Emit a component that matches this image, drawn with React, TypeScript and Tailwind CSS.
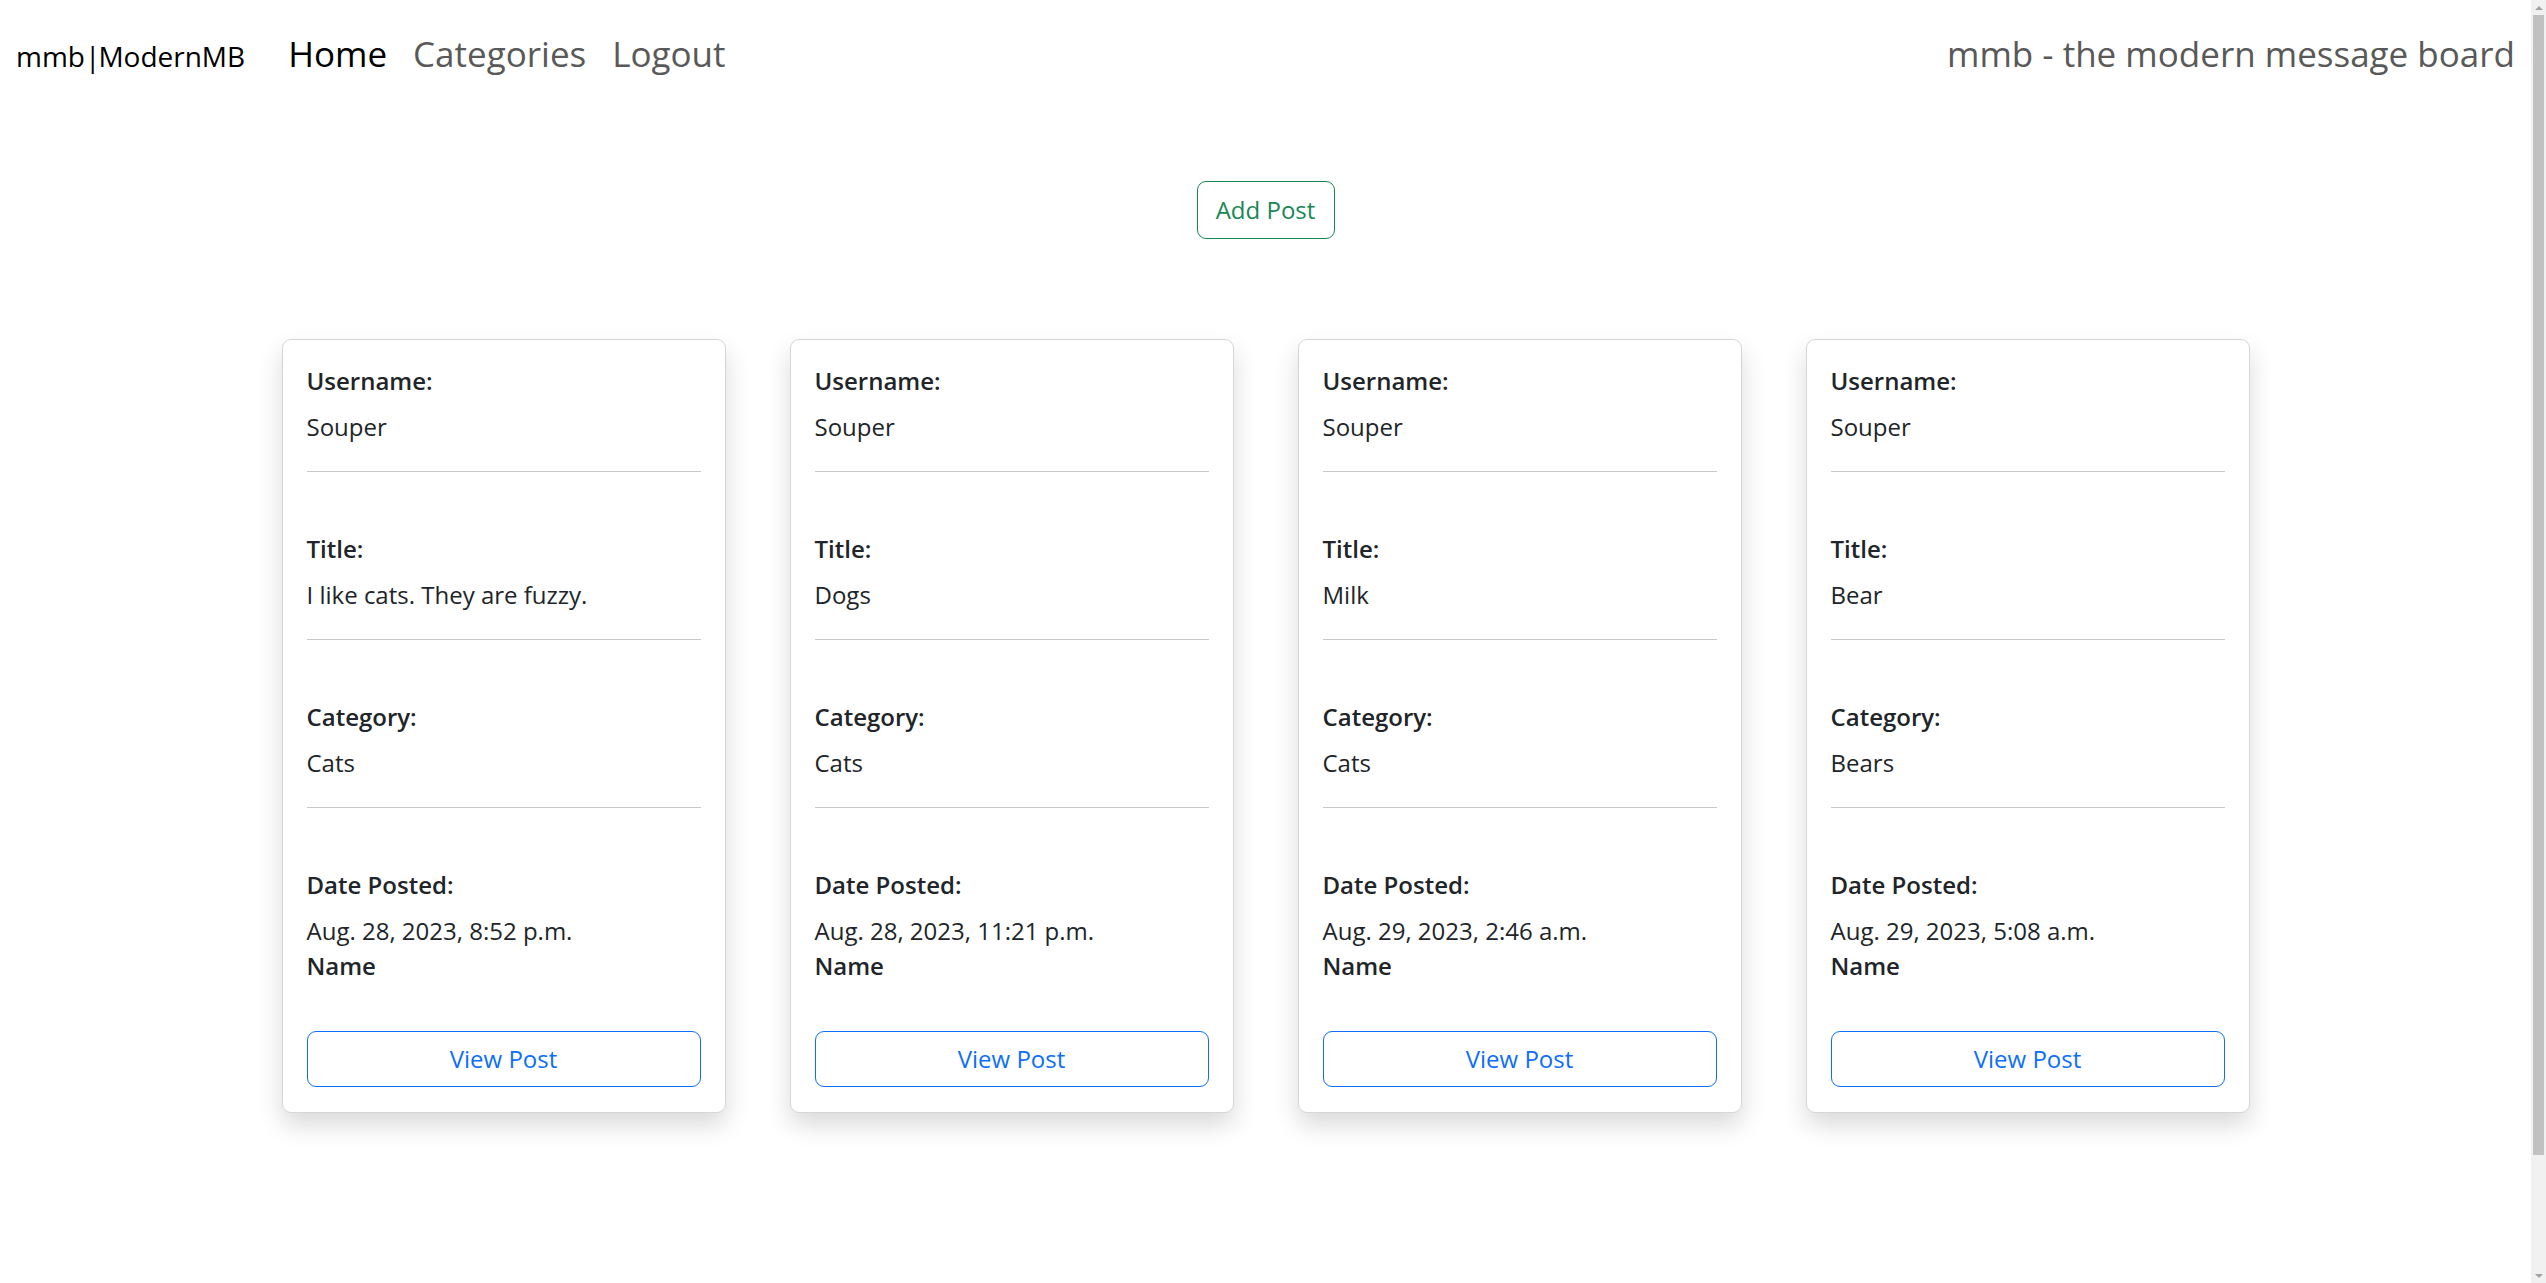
const posts = [
  {
    username: "Souper",
    title: "I like cats. They are fuzzy.",
    category: "Cats",
    date: "Aug. 28, 2023, 8:52 p.m.",
  },
  {
    username: "Souper",
    title: "Dogs",
    category: "Cats",
    date: "Aug. 28, 2023, 11:21 p.m.",
  },
  {
    username: "Souper",
    title: "Milk",
    category: "Cats",
    date: "Aug. 29, 2023, 2:46 a.m.",
  },
  {
    username: "Souper",
    title: "Bear",
    category: "Bears",
    date: "Aug. 29, 2023, 5:08 a.m.",
  },
];

type Post = (typeof posts)[number];

const Field = ({ label, value, last }: { label: string; value: string; last?: boolean }) => {
  return (
    <div className={last ? "" : "mb-[63px]"}>
      <h6 className="text-[24px] leading-[28px] font-semibold">{label}</h6>
      <p className="mt-[14px] text-[24px] leading-[36px]">{value}</p>
      {!last && <hr className="mt-[26px] border-0 h-px bg-[#c8c9ca]" />}
    </div>
  );
};

const PostCard = ({ post }: { post: Post }) => {
  return (
    <div className="w-[444px] bg-white border border-[#d6d7d8] rounded-[9px] shadow-[0_12px_24px_rgba(0,0,0,0.15)] px-[24px] pt-[27px] pb-[25px] text-[#212529]">
      <Field label="Username:" value={post.username} />
      <Field label="Title:" value={post.title} />
      <Field label="Category:" value={post.category} />
      <Field label="Date Posted:" value={post.date} last />
      <h6 className="mt-[3px] text-[24px] leading-[28px] font-semibold">Name</h6>
      <button className="mt-[51px] w-full h-[56px] border border-[#0d6efd] rounded-[9px] text-[#0d6efd] text-[24px] bg-white">
        View Post
      </button>
    </div>
  );
};

const App = () => {
  return (
    <div className="flex w-full h-screen overflow-hidden bg-white font-['Open_Sans',sans-serif]">
      <div className="flex-1 flex flex-col">
        <nav className="flex items-baseline px-[16px] pt-[27px]">
          <a className="text-[28px] leading-[40px] text-black mr-[30px]">
            mmb<span className="tracking-[-2px]">|</span>ModernMB
          </a>
          <ul className="flex items-baseline">
            <li>
              <a className="block px-[13px] text-[35px] leading-[54px] text-black">Home</a>
            </li>
            <li>
              <a className="block px-[13px] text-[35px] leading-[54px] text-[#595959]">Categories</a>
            </li>
            <li>
              <a className="block px-[13px] text-[35px] leading-[54px] text-[#595959]">Logout</a>
            </li>
          </ul>
          <span className="ml-auto text-[35px] leading-[54px] text-[#595959]">
            mmb - the modern message board
          </span>
        </nav>

        <div className="flex justify-center mt-[100px]">
          <button className="w-[138px] h-[58px] border border-[#198754] rounded-[9px] text-[#198754] text-[24px] bg-white">
            Add Post
          </button>
        </div>

        <div className="flex justify-center gap-[64px] mt-[100px]">
          {posts.map((post, i) => (
            <PostCard key={i} post={post} />
          ))}
        </div>
      </div>

      {/* scrollbar strip */}
      <div className="w-[15px] h-full bg-[#f1f1f1] flex flex-col items-center">
        <div className="h-[15px] flex items-center justify-center">
          <div className="w-0 h-0 border-l-[4px] border-r-[4px] border-b-[4px] border-l-transparent border-r-transparent border-b-[#a3a3a3]" />
        </div>
        <div className="w-[11px] h-[1140px] bg-[#c1c1c1]" />
        <div className="flex-1" />
        <div className="h-[15px] flex items-center justify-center">
          <div className="w-0 h-0 border-l-[4px] border-r-[4px] border-t-[4px] border-l-transparent border-r-transparent border-t-[#a3a3a3]" />
        </div>
      </div>
    </div>
  );
};

export default App;
